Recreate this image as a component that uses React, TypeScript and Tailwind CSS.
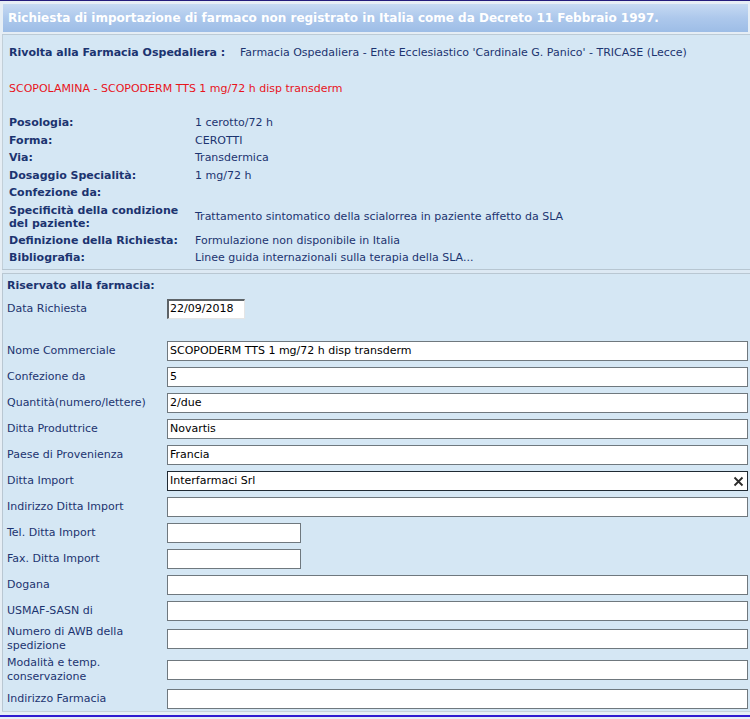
import React from "react";

const font = { fontFamily: '"DejaVu Sans", Verdana, sans-serif' };

const topRows: { label: string; value: string; two?: boolean }[] = [
  { label: "Posologia:", value: "1 cerotto/72 h" },
  { label: "Forma:", value: "CEROTTI" },
  { label: "Via:", value: "Transdermica" },
  { label: "Dosaggio Specialità:", value: "1 mg/72 h" },
  { label: "Confezione da:", value: "" },
  { label: "Specificità della condizione del paziente:", value: "Trattamento sintomatico della scialorrea in paziente affetto da SLA", two: true },
  { label: "Definizione della Richiesta:", value: "Formulazione non disponibile in Italia" },
  { label: "Bibliografia:", value: "Linee guida internazionali sulla terapia della SLA..." },
];

type Row = { label: string; value?: string; short?: boolean; two?: boolean; focus?: boolean; h?: string };

const formRows: Row[] = [
  { label: "Nome Commerciale", value: "SCOPODERM TTS 1 mg/72 h disp transderm" },
  { label: "Confezione da", value: "5" },
  { label: "Quantità(numero/lettere)", value: "2/due" },
  { label: "Ditta Produttrice", value: "Novartis" },
  { label: "Paese di Provenienza", value: "Francia" },
  { label: "Ditta Import", value: "Interfarmaci Srl", focus: true },
  { label: "Indirizzo Ditta Import" },
  { label: "Tel. Ditta Import", short: true },
  { label: "Fax. Ditta Import", short: true },
  { label: "Dogana" },
  { label: "USMAF-SASN di" },
  { label: "Numero di AWB della spedizione", two: true, h: "h-[29px]" },
  { label: "Modalità e temp. conservazione", two: true, h: "h-[33px]" },
  { label: "Indirizzo Farmacia" },
];

function Input({ value, short, focus }: { value?: string; short?: boolean; focus?: boolean }) {
  return (
    <div
      className={`relative h-[20px] bg-white border flex items-center px-[2px] text-[11px] text-black ${
        short ? "w-[134px]" : "flex-1 mr-[2px]"
      } ${focus ? "border-[#1f2a33]" : "border-[#6f787e]"}`}
    >
      <span className="leading-[14px]">{value}</span>
      {focus && (
        <svg className="absolute right-[3px] top-[4px]" width="11" height="11" viewBox="0 0 11 11">
          <path d="M1.5 1.5 L9.5 9.5 M9.5 1.5 L1.5 9.5" stroke="#2b2b2b" strokeWidth="1.8" />
        </svg>
      )}
    </div>
  );
}

export default function App() {
  return (
    <div className="w-[750px] h-[719px] bg-[#e6eef5] overflow-hidden flex flex-col" style={font}>
      <div className="h-[1px] bg-[#231c7c]" />
      <div className="h-[3px]" />
      {/* header */}
      <div className="ml-[3px] mr-[2px] h-[28px] flex items-center pl-[5px] bg-gradient-to-b from-[#c6daf2] via-[#adc8ec] to-[#9dbde6]">
        <span className="text-white font-bold text-[12px] leading-[14px]">
          Richiesta di importazione di farmaco non registrato in Italia come da Decreto 11 Febbraio 1997.
        </span>
      </div>
      <div className="h-[2px]" />
      <div className="h-[1px] bg-[#bccbd6] ml-[2px]" />
      {/* top panel */}
      <div className="ml-[2px] border-l border-[#c2cfd8] bg-[#d5e7f4] h-[234px] pl-[6px] pt-[11px] text-[11px] text-[#1c3470]">
        <div className="flex leading-[14px]">
          <span className="font-bold w-[231px]">Rivolta alla Farmacia Ospedaliera :</span>
          <span>Farmacia Ospedaliera - Ente Ecclesiastico 'Cardinale G. Panico' - TRICASE (Lecce)</span>
        </div>
        <div className="mt-[22px] leading-[14px] text-[#e8141c]">
          SCOPOLAMINA - SCOPODERM TTS 1 mg/72 h disp transderm
        </div>
        <div className="mt-[18px] flex flex-col">
          {topRows.map((r) => (
            <div key={r.label} className={`flex items-center ${r.two ? "h-[30px]" : "h-[17.5px]"}`}>
              <span className="font-bold w-[186px] leading-[13px] pr-[4px]">{r.label}</span>
              <span className="leading-[13px]">{r.value}</span>
            </div>
          ))}
        </div>
      </div>
      <div className="h-[4px] ml-[2px] bg-[#dde9f3] border-t border-[#b7c6d1]" />
      {/* bottom panel */}
      <div className="ml-[2px] border-l border-t border-[#b9c7d2] bg-[#d5e7f4] h-[438px] pl-[4px] text-[11px] text-[#1c3470]">
        <div className="h-[22px] flex items-center font-bold leading-[14px] pt-[1px]">Riservato alla farmacia:</div>
        <div className="h-[25px] flex items-center">
          <span className="w-[160px] leading-[14px] pt-[1px]">Data Richiesta</span>
          <div className="h-[20px] w-[78px] bg-white border-t-2 border-l-2 border-[#5d6367] border-r border-b border-r-[#e5e5e5] border-b-[#e5e5e5] flex items-center px-[1px] text-black">
            <span className="leading-[14px]">22/09/2018</span>
          </div>
        </div>
        <div className="h-[17px]" />
        {formRows.map((r) => (
          <div key={r.label} className={`flex items-center ${r.h ?? "h-[26px]"}`}>
            <span className={`w-[160px] shrink-0 leading-[14px] ${r.two ? "pr-[20px]" : ""}`}>{r.label}</span>
            <Input value={r.value} short={r.short} focus={r.focus} />
          </div>
        ))}
      </div>
      <div className="h-[1px] ml-[2px] bg-[#c5d1da]" />
      <div className="h-[3px]" />
      <div className="h-[2px] bg-[#2f1bd0]" />
    </div>
  );
}
